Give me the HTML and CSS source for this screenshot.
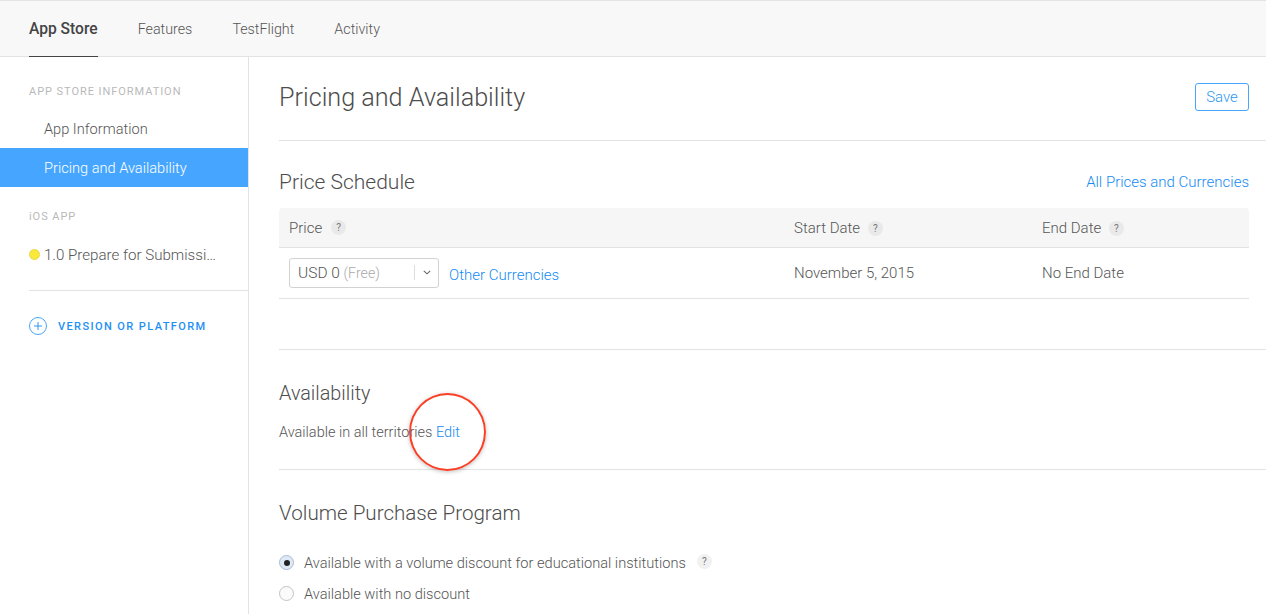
FILE: index.html
```html
<!DOCTYPE html>
<html lang="en">
<head>
<meta charset="UTF-8">
<title>Pricing and Availability</title>
<link rel="stylesheet" href="styles.css">
</head>
<body>

<nav class="topnav">
  <a class="tab active">App Store</a>
  <a class="tab">Features</a>
  <a class="tab">TestFlight</a>
  <a class="tab">Activity</a>
</nav>

<div class="container">
  <aside class="sidebar">
    <div class="side-label first">APP STORE INFORMATION</div>
    <a class="side-item">App Information</a>
    <a class="side-item selected">Pricing and Availability</a>
    <div class="side-label second">iOS APP</div>
    <a class="side-item version"><span class="dot"></span><span class="version-name">1.0 Prepare for Submissi…</span></a>
    <div class="side-rule"></div>
    <a class="add-version">
      <svg class="plus" width="18" height="18" viewBox="0 0 18 18"><circle cx="9" cy="9" r="8.5" fill="none" stroke="#4aa5f5"/><path d="M5 9h8M9 5v8" stroke="#2b96f1" fill="none"/></svg>
      <span>VERSION OR PLATFORM</span>
    </a>
  </aside>

  <main class="main">
    <section class="title-row">
      <h1>Pricing and Availability</h1>
      <button class="save">Save</button>
    </section>

    <section class="schedule">
      <div class="section-head">
        <h2>Price Schedule</h2>
        <a class="link">All Prices and Currencies</a>
      </div>
      <div class="price-table">
        <div class="row head">
          <div class="col-price">Price <span class="help">?</span></div>
          <div class="col-start">Start Date <span class="help">?</span></div>
          <div class="col-end">End Date <span class="help">?</span></div>
        </div>
        <div class="row body">
          <div class="col-price">
            <div class="select">
              <span class="select-value"><span class="amount">USD 0</span> <em>(Free)</em></span>
              <span class="select-arrow">
                <svg width="8" height="5" viewBox="0 0 8 5"><path d="M.8.8 4 3.8 7.2.8" fill="none" stroke="#666" stroke-width="1.1"/></svg>
              </span>
            </div>
            <a class="link other">Other Currencies</a>
          </div>
          <div class="col-start">November 5, 2015</div>
          <div class="col-end">No End Date</div>
        </div>
      </div>
    </section>

    <section class="availability">
      <h2>Availability</h2>
      <p class="avail-text">Available in all territories <a class="link">Edit</a><span class="callout"></span></p>
    </section>

    <section class="volume">
      <h2>Volume Purchase Program</h2>
      <label class="radio-row"><span class="radio checked"></span>Available with a volume discount for educational institutions <span class="help light">?</span></label>
      <label class="radio-row"><span class="radio"></span>Available with no discount</label>
    </section>
  </main>
</div>

</body>
</html>
```

FILE: styles.css
```css
html, body { height: 100%; }
body {
  margin: 0;
  font-family: "Roboto", "Liberation Sans", sans-serif;
  font-weight: 300;
  font-size: 15px;
  color: #555;
  background-color: #fff;
  overflow: hidden;
}
a { cursor: pointer; }
.topnav {
  display: flex;
  gap: 40px;
  height: 55px;
  padding-left: 29px;
  background-color: #f8f8f8;
  border-top: 1px solid #e3e3e3;
  border-bottom: 1px solid #e3e3e3;
}
.tab {
  height: 56px;
  line-height: 57px;
  font-size: 14.3px;
  color: #555;
}
.tab.active {
  font-size: 15.6px;
  font-weight: 500;
  color: #444;
  border-bottom: 1px solid #444;
  box-sizing: border-box;
}
.container {
  display: flex;
  height: 557px;
}
.sidebar {
  width: 248px;
  flex: none;
  border-right: 1px solid #e3e3e3;
}
.side-label {
  padding-left: 29px;
  font-size: 11px;
  font-weight: 400;
  letter-spacing: 0.95px;
  color: #b9b9b9;
  line-height: 14px;
}
.side-label.first { padding-top: 28px; padding-bottom: 10px; }
.side-label.second { padding-top: 23px; padding-bottom: 10px; }
.side-item {
  display: block;
  height: 39px;
  line-height: 41px;
  padding-left: 44px;
  font-size: 14.6px;
}
.side-item.selected {
  background-color: #46a6ff;
  color: #fff;
}
.side-item.version {
  display: flex;
  align-items: center;
  box-sizing: border-box;
  padding-left: 29px;
  padding-top: 2px;
  line-height: 20px;
}
.dot {
  width: 9px;
  height: 9px;
  border-radius: 50%;
  background-color: #fbe83c;
  border: 0.5px solid #e8d84a;
  margin-right: 5px;
  flex: none;
}
.version-name { white-space: nowrap; font-size: 15.1px; margin-left: -1px; }
.side-rule {
  margin: 17px 0 0 29px;
  border-top: 1px solid #e3e3e3;
}
.add-version {
  display: flex;
  align-items: center;
  gap: 11px;
  margin: 26px 0 0 29px;
  font-size: 11px;
  font-weight: 500;
  letter-spacing: 1.4px;
  color: #1d90f5;
}
.main { flex: 1; min-width: 0; }
section {
  margin-left: 30px;
  padding-right: 17px;
  border-bottom: 1px solid #e3e3e3;
}
section.volume { border-bottom: none; }
.title-row {
  display: flex;
  justify-content: space-between;
  height: 83px;
}
h1 {
  margin: 25px 0 0;
  font-size: 25.2px;
  font-weight: 300;
  color: #4d4d4d;
  line-height: 32px;
}
h2 {
  margin: 0;
  font-size: 20.6px;
  font-weight: 300;
  color: #4d4d4d;
  line-height: 26px;
}
.schedule h2 { font-size: 21px; }
.save {
  width: 54px;
  height: 28px;
  margin-top: 26px;
  padding: 0;
  background-color: #fff;
  border: 1px solid #46a6ff;
  border-radius: 3px;
  font-family: inherit;
  font-size: 15px;
  font-weight: 300;
  color: #2b96f1;
}
.link { color: #148bf3; }
.schedule { height: 208px; }
.section-head {
  display: flex;
  justify-content: space-between;
  align-items: center;
  padding-top: 28px;
  height: 26px;
  margin-bottom: 13px;
}
.row { display: flex; align-items: center; }
.row.head {
  height: 39px;
  background-color: #f6f6f6;
  border-radius: 4px 4px 0 0;
  border-bottom: 1px solid #e3e3e3;
}
.row.body {
  height: 50px;
  border-bottom: 1px solid #e3e3e3;
}
.col-price { width: 515px; padding-left: 10px; display: flex; align-items: center; gap: 5px; box-sizing: border-box; }
.col-start { width: 248px; }
.col-end { flex: 1; }
.help {
  display: inline-flex;
  align-items: center;
  justify-content: center;
  width: 15px;
  height: 15px;
  margin-left: 4px;
  border-radius: 50%;
  background-color: #e9e9e9;
  font-size: 10px;
  font-weight: 400;
  color: #777;
  vertical-align: 1px;
}
.help.light { background-color: #f1f1f1; margin: -3px 0 0 11px; }
.select {
  display: flex;
  align-items: center;
  width: 150px;
  height: 30px;
  border: 1px solid #d2d2d2;
  border-radius: 3px;
  box-sizing: border-box;
  margin-top: -1px;
}
.select-value { flex: 1; padding-left: 8px; }
.amount { font-size: 15.5px; }
.select-value em { font-style: normal; font-size: 14.2px; color: #aaa; }
.select-arrow {
  width: 23px;
  height: 15px;
  border-left: 1px solid #ddd;
  display: flex;
  align-items: center;
  justify-content: center;
}
.other { margin-left: 5px; margin-top: 3px; }
.availability { height: 119px; box-sizing: content-box; }
.availability h2 { padding-top: 31px; font-size: 19.8px; }
.avail-text {
  position: relative;
  margin: 16px 0 0;
  line-height: 20px;
  font-size: 14.5px;
}
.callout {
  position: absolute;
  left: 130px;
  top: -30px;
  width: 73px;
  height: 74px;
  border: 2px solid #fb3f24;
  border-radius: 50%;
  box-shadow: 0 1px 4px rgba(0,0,0,0.25);
}
.volume h2 { padding-top: 30px; margin-bottom: 21px; }
.radio-row {
  display: flex;
  align-items: center;
  height: 31px;
  font-size: 14.6px;
}
.radio {
  width: 13px;
  height: 13px;
  border-radius: 50%;
  border: 1px solid #c4c4c4;
  background-color: #fbfbfb;
  margin-right: 10px;
  flex: none;
  position: relative;
}
.radio.checked { background-color: #dfe9f5; border-color: #a9bcd2; }
.radio.checked::after {
  content: "";
  position: absolute;
  left: 3.5px;
  top: 3.5px;
  width: 6px;
  height: 6px;
  border-radius: 50%;
  background-color: #222;
}
```
